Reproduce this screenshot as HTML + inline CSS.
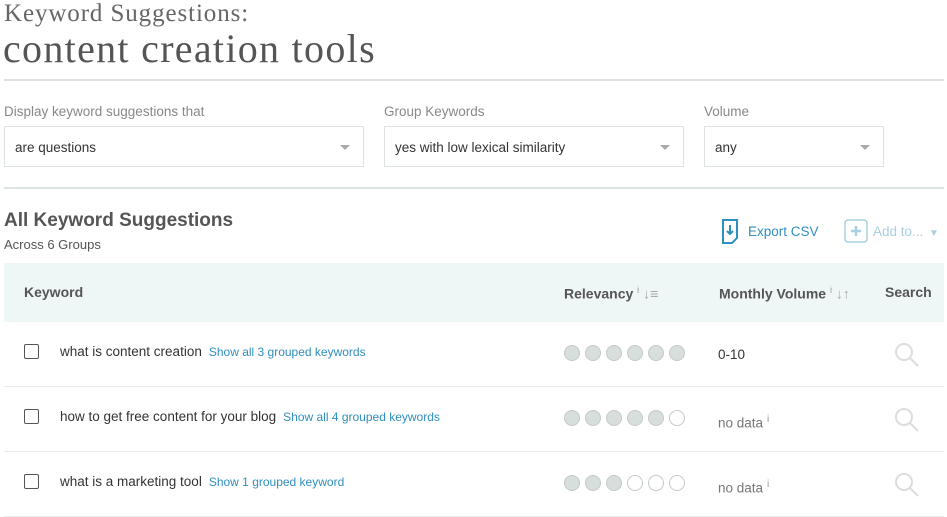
<!DOCTYPE html>
<html><head><style>
body{margin:0;width:947px;height:513px;overflow:hidden;background:#fff;font-family:"Liberation Sans",sans-serif;color:#444;position:relative}
.a{position:absolute;white-space:nowrap}
.sel{position:absolute;top:126px;height:41px;border:1px solid #dde2e2;box-sizing:border-box;font-size:13.5px;color:#333;line-height:41px;padding-left:10px}
.sel:after{content:"";position:absolute;right:13px;top:18px;border-left:5px solid transparent;border-right:5px solid transparent;border-top:5px solid #aaa}
.lab{font-size:13.5px;color:#888;top:104px}
.hr{position:absolute;left:4px;width:940px;height:2px;background:#dde2e2}
.row{position:absolute;left:4px;width:940px;height:64px;border-bottom:1px solid #e6eaea}
.cb{position:absolute;left:20px;top:22px;width:15px;height:15px;border:1.5px solid #555;border-radius:2px;box-sizing:border-box}
.kw{position:absolute;left:56px;top:22px;font-size:13.5px;color:#333}
.kw span{font-size:12px;color:#2f8fbf;margin-left:7px}
.dots{position:absolute;left:560px;top:23px;font-size:0}
.d{display:inline-block;width:16px;height:16px;border-radius:50%;background:#d8dedc;border:1px solid #c2cac8;margin-right:5px;box-sizing:border-box}
.d.e{background:#fff}
.vol{position:absolute;left:714px;top:25px;font-size:13.5px;color:#333}
.vol.n{color:#777;top:27px}
.vol sup{font-size:10px;color:#999;margin-left:4px}
.mag{position:absolute;left:890px;top:20px}
</style></head><body>
<div class="a" style="left:4px;top:0;font-family:'Liberation Serif',serif;font-size:25px;letter-spacing:0.9px;color:#666">Keyword Suggestions:</div>
<div class="a" style="left:3px;top:25px;font-family:'Liberation Serif',serif;font-size:40px;letter-spacing:1.3px;color:#555">content creation tools</div>
<div class="hr" style="top:79px"></div>
<div class="a lab" style="left:4px">Display keyword suggestions that</div>
<div class="a lab" style="left:384px">Group Keywords</div>
<div class="a lab" style="left:704px">Volume</div>
<div class="sel" style="left:4px;width:360px">are questions</div>
<div class="sel" style="left:384px;width:300px">yes with low lexical similarity</div>
<div class="sel" style="left:704px;width:180px">any</div>
<div class="hr" style="top:187px"></div>
<div class="a" style="left:4px;top:210px;font-size:19px;font-weight:bold;color:#555">All Keyword Suggestions</div>
<div class="a" style="left:4px;top:237px;font-size:13px;color:#555">Across 6 Groups</div>
<svg class="a" style="left:721px;top:219px" width="20" height="25" viewBox="0 0 20 25"><path d="M2 1h14v18l-5 5H2z" fill="none" stroke="#2f8fbf" stroke-width="2"/><path d="M9 6v9M6 12l3 3 3-3" fill="none" stroke="#2f8fbf" stroke-width="2"/></svg>
<div class="a" style="left:748px;top:224px;font-size:13.5px;color:#2f8fbf">Export CSV</div>
<svg class="a" style="left:844px;top:219px" width="24" height="24"><rect x="1" y="1" width="22" height="22" rx="3" fill="none" stroke="#a8d0e2" stroke-width="1.5"/><path d="M12 7v10M7 12h10" stroke="#a8d0e2" stroke-width="2.5"/></svg>
<div class="a" style="left:873px;top:224px;font-size:13.5px;color:#a8d0e2">Add to... <span style="font-size:10px;margin-left:2px">▼</span></div>
<div class="a" style="left:4px;top:263px;width:940px;height:59px;background:#eef6f6"></div>
<div class="a" style="left:24px;top:284px;font-size:14px;font-weight:bold;color:#555">Keyword</div>
<div class="a" style="left:564px;top:285px;font-size:14px;font-weight:bold;color:#555">Relevancy <sup style="font-size:9px;color:#999;font-weight:normal">i</sup> <span style="color:#aaa;font-weight:normal">↓≡</span></div>
<div class="a" style="left:719px;top:285px;font-size:14px;font-weight:bold;color:#555">Monthly Volume <sup style="font-size:9px;color:#999;font-weight:normal">i</sup> <span style="color:#aaa;font-weight:normal">↓↑</span></div>
<div class="a" style="left:885px;top:284px;font-size:14px;font-weight:bold;color:#555">Search</div>
<div class="row" style="top:322px"><div class="cb"></div><div class="kw">what is content creation<span>Show all 3 grouped keywords</span></div><div class="dots"><i class="d"></i><i class="d"></i><i class="d"></i><i class="d"></i><i class="d"></i><i class="d"></i></div><div class="vol">0-10</div><svg class="mag" width="26" height="26"><circle cx="10" cy="10" r="8" fill="none" stroke="#ddd" stroke-width="2"/><path d="M16 16l8 8" stroke="#ddd" stroke-width="2"/></svg></div>
<div class="row" style="top:387px"><div class="cb"></div><div class="kw">how to get free content for your blog<span>Show all 4 grouped keywords</span></div><div class="dots"><i class="d"></i><i class="d"></i><i class="d"></i><i class="d"></i><i class="d"></i><i class="d e"></i></div><div class="vol n">no data<sup>i</sup></div><svg class="mag" width="26" height="26"><circle cx="10" cy="10" r="8" fill="none" stroke="#ddd" stroke-width="2"/><path d="M16 16l8 8" stroke="#ddd" stroke-width="2"/></svg></div>
<div class="row" style="top:452px"><div class="cb"></div><div class="kw">what is a marketing tool<span>Show 1 grouped keyword</span></div><div class="dots"><i class="d"></i><i class="d"></i><i class="d"></i><i class="d e"></i><i class="d e"></i><i class="d e"></i></div><div class="vol n">no data<sup>i</sup></div><svg class="mag" width="26" height="26"><circle cx="10" cy="10" r="8" fill="none" stroke="#ddd" stroke-width="2"/><path d="M16 16l8 8" stroke="#ddd" stroke-width="2"/></svg></div>
</body></html>
